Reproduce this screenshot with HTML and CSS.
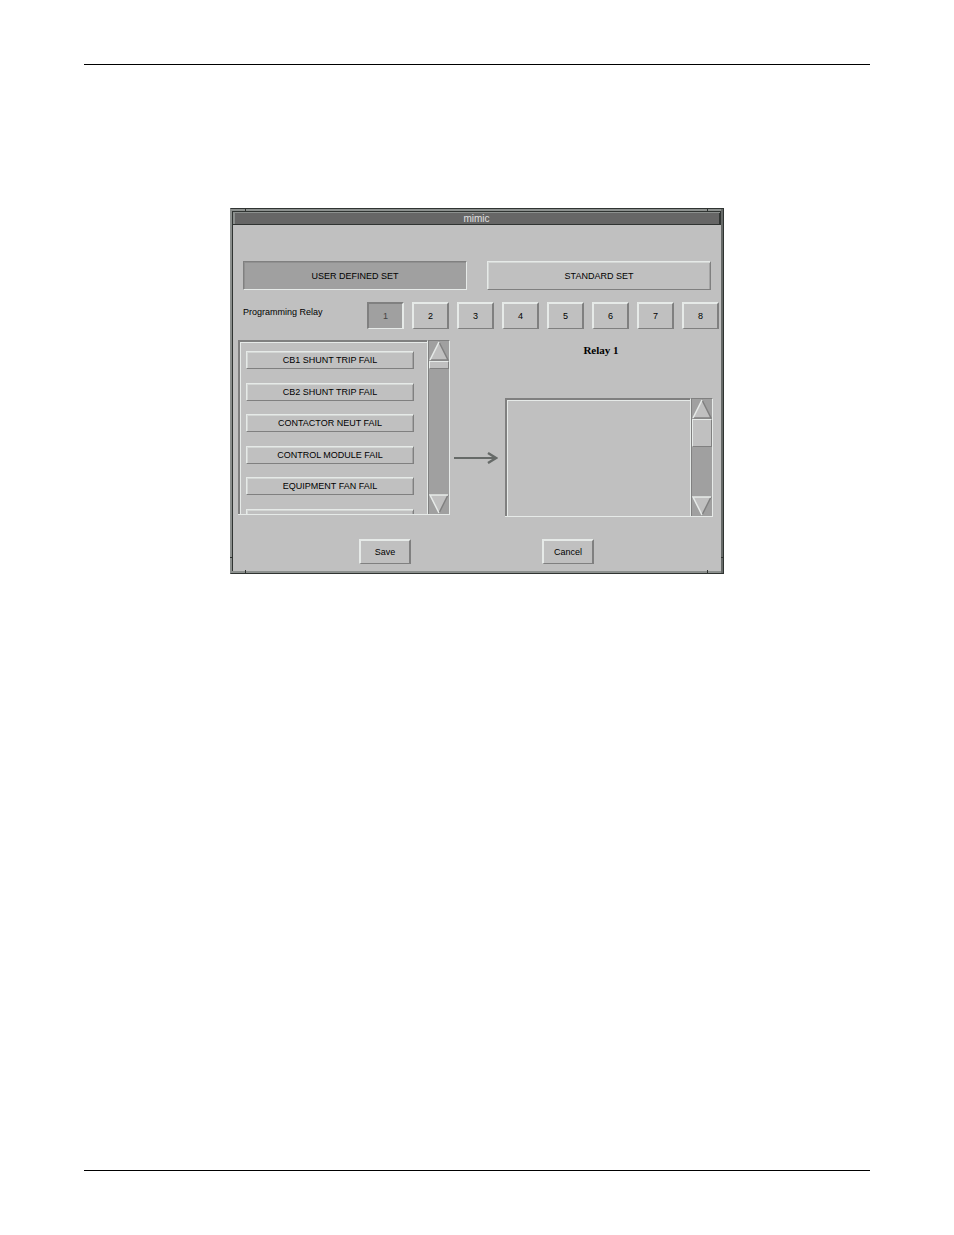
FILE: index.html
```html
<!DOCTYPE html>
<html lang="en">
<head>
    <meta charset="UTF-8">
    <meta name="viewport" content="width=device-width, initial-scale=1.0">
    <title>mimic</title>
    <link rel="stylesheet" href="styles.css">
</head>
<body>
    <div class="page">
        <hr class="rule">

        <main class="window">
            <!-- Frame notches -->
            <span class="notch notch-v top left"></span>
            <span class="notch notch-v top right"></span>
            <span class="notch notch-v bottom left"></span>
            <span class="notch notch-v bottom right"></span>
            <span class="notch notch-h left"></span>
            <span class="notch notch-h right"></span>

            <h1 class="titlebar">mimic</h1>

            <form class="content">
                <div class="sets">
                    <button type="button" class="btn pressed">USER DEFINED SET</button>
                    <button type="button" class="btn">STANDARD SET</button>
                </div>

                <div class="relays">
                    <span class="relays-label" id="relaysLabel">Programming Relay</span>
                    <div class="relay-buttons" role="group" aria-labelledby="relaysLabel">
                        <button type="button" class="btn pressed dim">1</button>
                        <button type="button" class="btn">2</button>
                        <button type="button" class="btn">3</button>
                        <button type="button" class="btn">4</button>
                        <button type="button" class="btn">5</button>
                        <button type="button" class="btn">6</button>
                        <button type="button" class="btn">7</button>
                        <button type="button" class="btn">8</button>
                    </div>
                </div>

                <div class="transfer">
                    <!-- Available alarms -->
                    <div class="panel available">
                        <div class="viewport">
                            <div class="alarms">
                                <button type="button" class="btn">CB1 SHUNT TRIP FAIL</button>
                                <button type="button" class="btn">CB2 SHUNT TRIP FAIL</button>
                                <button type="button" class="btn">CONTACTOR NEUT FAIL</button>
                                <button type="button" class="btn">CONTROL MODULE FAIL</button>
                                <button type="button" class="btn">EQUIPMENT FAN FAIL</button>
                                <button type="button" class="btn" aria-label="Next alarm"></button>
                            </div>
                        </div>
                        <div class="scrollbar">
                            <button type="button" class="arrow" aria-label="Scroll up">
                                <svg viewBox="0 0 20 20" width="20" height="20">
                                    <path d="M10 1 L19 19 H1 Z" fill="#c0c0c0"/>
                                    <path d="M10 1 L19 19 H1" fill="none" stroke="#808080" stroke-width="1.5"/>
                                    <path d="M10 1 L1 19" stroke="#e6eae8" stroke-width="1.5"/>
                                </svg>
                            </button>
                            <div class="thumb"></div>
                            <button type="button" class="arrow arrow-down" aria-label="Scroll down">
                                <svg viewBox="0 0 20 20" width="20" height="20">
                                    <path d="M1 1 H19 L10 19 Z" fill="#c0c0c0"/>
                                    <path d="M19 1 L10 19" stroke="#808080" stroke-width="1.5"/>
                                    <path d="M19 1 H1 L10 19" fill="none" stroke="#e6eae8" stroke-width="1.5"/>
                                </svg>
                            </button>
                        </div>
                    </div>

                    <svg class="to-relay" viewBox="0 0 44 12" width="44" height="12">
                        <path d="M0 6 H41" fill="none" stroke="#666a68" stroke-width="2"/>
                        <path d="M34 1 L42 6 L34 11" fill="none" stroke="#666a68" stroke-width="2.4"/>
                    </svg>

                    <!-- Alarms assigned to the relay -->
                    <div class="assigned">
                        <h2 class="relay-title">Relay 1</h2>
                        <div class="panel selected">
                            <div class="viewport"></div>
                            <div class="scrollbar">
                                <button type="button" class="arrow" aria-label="Scroll up">
                                    <svg viewBox="0 0 20 20" width="20" height="20">
                                        <path d="M10 1 L19 19 H1 Z" fill="#c0c0c0"/>
                                        <path d="M10 1 L19 19 H1" fill="none" stroke="#808080" stroke-width="1.5"/>
                                        <path d="M10 1 L1 19" stroke="#e6eae8" stroke-width="1.5"/>
                                    </svg>
                                </button>
                                <div class="thumb thumb-large"></div>
                                <button type="button" class="arrow arrow-down" aria-label="Scroll down">
                                    <svg viewBox="0 0 20 20" width="20" height="20">
                                        <path d="M1 1 H19 L10 19 Z" fill="#c0c0c0"/>
                                        <path d="M19 1 L10 19" stroke="#808080" stroke-width="1.5"/>
                                        <path d="M19 1 H1 L10 19" fill="none" stroke="#e6eae8" stroke-width="1.5"/>
                                    </svg>
                                </button>
                            </div>
                        </div>
                    </div>
                </div>

                <div class="actions">
                    <button type="button" class="btn">Save</button>
                    <button type="button" class="btn">Cancel</button>
                </div>
            </form>
        </main>

        <hr class="rule rule-bottom">
    </div>
</body>
</html>
```

FILE: styles.css
```css
* {
    box-sizing: border-box;
}

body {
    margin: 0;
    background-color: #fff;
    color: #000;
    font-family: "Liberation Sans", Arial, sans-serif;
    font-size: 9px;
}

.page {
    display: flex;
    flex-direction: column;
    min-height: 100vh;
    padding: 64px 84px;
}

.rule {
    width: 100%;
    margin: 0;
    border: 0;
    border-top: 1px solid #000;
}

.rule-bottom {
    margin-top: auto;
}

/* Window frame */
.window {
    position: relative;
    width: 100%;
    max-width: 494px;
    margin: 143px auto 40px;
    padding: 2px 2px 2px 1px;
    background-color: #8c908e;
    border: 1px solid #303432;
    border-left-color: #8c908e;
    box-shadow: inset -2px 0 #666a68;
}

.notch {
    position: absolute;
    background-color: #303432;
}

.notch-v {
    width: 1px;
    height: 3px;
}

.notch-v.left {
    left: 14px;
}

.notch-v.right {
    right: 15px;
}

.notch.top {
    top: 0;
}

.notch.bottom {
    bottom: 0;
}

.notch-h {
    width: 3px;
    height: 1px;
    bottom: 15px;
}

.notch-h.left {
    left: -1px;
}

.notch-h.right {
    right: -1px;
}

.titlebar {
    height: 14px;
    margin: 0;
    border: 1px solid #303432;
    background-color: #666;
    box-shadow: inset 2px 1px #8c908e, inset -1px 0 #303432;
    color: #e0e0e0;
    font-size: 10px;
    font-weight: normal;
    line-height: 13px;
    text-align: center;
}

.content {
    padding: 36px 0 7px;
    border-left: 1px solid #303432;
    background-color: #c0c0c0;
}

/* Buttons */
.btn {
    padding: 0;
    border: 2px solid;
    border-color: #e6eae8 #808080 #808080 #e6eae8;
    border-bottom-width: 1px;
    background-color: #c0c0c0;
    color: #000;
    font-family: inherit;
    font-size: 9px;
    line-height: 14px;
    text-align: center;
}

.btn.pressed {
    border-color: #808080 #e6eae8 #e6eae8 #808080;
    background-color: #a0a0a0;
}

.btn.dim {
    color: #444;
}

.sets {
    display: grid;
    grid-template-columns: 1fr 1fr;
    gap: 20px;
    padding: 0 10px;
}

.sets .btn,
.alarms .btn {
    border-width: 1px;
    box-shadow: inset 1px 1px #d4d7d5, inset -1px 0 #a4a4a4;
}

.sets .btn {
    height: 29px;
}

.sets .btn.pressed {
    box-shadow: inset 1px 1px #909090;
}

.relays {
    display: flex;
    align-items: flex-start;
    margin-top: 12px;
    padding: 0 2px 0 10px;
}

.relays-label {
    width: 124px;
    line-height: 20px;
}

.relay-buttons {
    flex: 1;
    display: grid;
    grid-template-columns: repeat(8, 1fr);
    gap: 8px;
}

.relay-buttons .btn {
    height: 27px;
}

/* Alarm lists */
.transfer {
    display: grid;
    grid-template-columns: 212px 1fr 208px;
    margin-top: 11px;
    padding: 0 8px 0 5px;
}

.panel {
    display: flex;
    border-bottom: 1px solid #e6eae8;
}

.available {
    height: 175px;
}

.selected {
    height: 119px;
}

.viewport {
    flex: 1;
    overflow: hidden;
    border-top: 2px solid #808080;
    border-left: 2px solid #808080;
    box-shadow: inset 1px 1px #e6eae8;
}

.alarms {
    display: flex;
    flex-direction: column;
    justify-content: space-between;
    height: 185px;
    padding: 9px 13px 0 6px;
}

.alarms .btn {
    flex: none;
    height: 18px;
}

.scrollbar {
    display: flex;
    flex-direction: column;
    width: 23px;
    border: 1px solid #e6eae8;
    border-top-color: #808080;
    border-bottom: 0;
    background-color: #a0a0a0;
    box-shadow: inset 1px 0 #808080;
}

.arrow {
    height: 20px;
    padding: 0 0 0 1px;
    border: 0;
    background: none;
}

.arrow svg {
    display: block;
}

.arrow-down {
    margin-top: auto;
}

.thumb {
    height: 8px;
    margin-left: 1px;
    border: 1px solid;
    border-color: #e6eae8 #808080 #808080 #e6eae8;
    background-color: #c0c0c0;
}

.thumb-large {
    height: 28px;
}

.to-relay {
    margin: 112px 0 0 4px;
}

.relay-title {
    margin: 0 0 38px;
    padding-right: 16px;
    font-family: "Liberation Serif", serif;
    font-size: 11px;
    line-height: 20px;
    text-align: center;
}

/* Save / Cancel */
.actions {
    display: flex;
    justify-content: center;
    gap: 131px;
    margin-top: 22px;
    padding-right: 1px;
}

.actions .btn {
    width: 52px;
    height: 25px;
}
```
